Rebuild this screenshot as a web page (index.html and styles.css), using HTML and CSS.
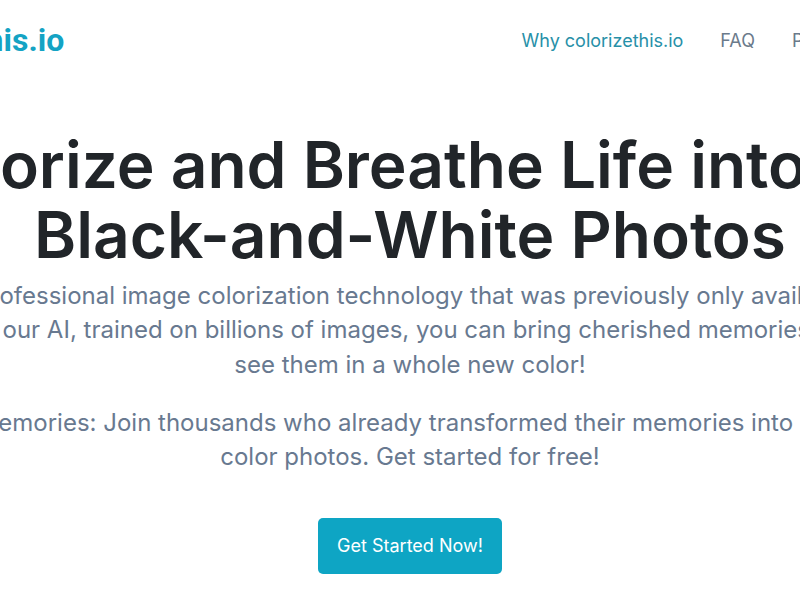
FILE: index.html
```html
<!DOCTYPE html>
<html lang="en">
<head>
<meta charset="utf-8">
<title>colorizethis.io</title>
<link rel="stylesheet" href="styles.css">
</head>
<body>
<div class="page">
  <div class="container">
    <header class="header">
      <a class="logo" href="#">colorizethis.io</a>
      <nav class="nav">
        <a class="nav-link active" href="#">Why colorizethis.io</a>
        <a class="nav-link" href="#">FAQ</a>
        <a class="nav-link" href="#">Pricing</a>
        <a class="nav-link" href="#">Contact</a>
      </nav>
    </header>
    <main class="hero">
      <h1 class="title">Colorize and Breathe Life into Your<br>Black-and-White Photos</h1>
      <p class="lead">Experience professional image colorization technology that was previously only available to experts.<br>With our AI, trained on billions of images, you can bring cherished memories alive,<br>see them in a whole new color!</p>
      <p class="lead">Relive your memories: Join thousands who already transformed their memories into amazing lifelike<br>color photos. Get started for free!</p>
      <a class="btn" href="#">Get Started Now!</a>
    </main>
  </div>
</div>
</body>
</html>
```

FILE: styles.css
```css
html, body {
  margin: 0;
  padding: 0;
  background: #ffffff;
  overflow: hidden;
}
body {
  font-family: Inter, "Noto Sans", sans-serif;
}
.page {
  display: flex;
  justify-content: center;
  padding-left: 20px;
}
.container {
  flex: 0 0 1100px;
  width: 1100px;
  display: flex;
  flex-direction: column;
}
.header {
  height: 80px;
  padding-right: 5px;
  display: flex;
  align-items: center;
  justify-content: space-between;
}
.logo {
  font-family: Roboto, Inter, sans-serif;
  font-weight: 700;
  font-size: 32px;
  color: #14a3c4;
  text-decoration: none;
}
.nav {
  display: flex;
  gap: 37px;
}
.nav-link {
  font-size: 18px;
  color: #6b7a8b;
  text-decoration: none;
}
.nav-link.active {
  color: #2790a8;
}
.hero {
  display: flex;
  flex-direction: column;
  align-items: center;
  text-align: center;
  padding-top: 50px;
}
.title {
  width: 1026px;
  margin: 0 0 8px;
  font-size: 64px;
  line-height: 1.1;
  font-weight: 600;
  color: #212529;
  white-space: nowrap;
}
.lead {
  margin: 0 0 23.5px;
  font-size: 24px;
  line-height: 34.5px;
  color: #687990;
  white-space: nowrap;
}
.btn {
  margin-top: 20px;
  display: inline-block;
  padding: 16px 19px;
  font-size: 18px;
  line-height: 24px;
  color: #ffffff;
  background: #0ea5c4;
  border-radius: 5px;
  text-decoration: none;
}
```
